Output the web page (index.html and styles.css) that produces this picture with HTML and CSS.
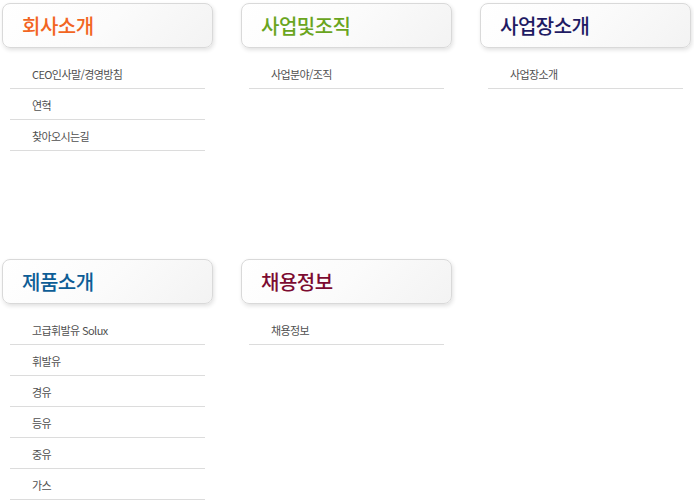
FILE: index.html
```html
<!DOCTYPE html>
<html lang="ko">
<head>
    <meta charset="UTF-8">
    <title>사이트맵</title>
    <link rel="stylesheet" href="styles.css">
</head>
<body>
    <div class="sitemap">
        <!-- 회사소개 -->
        <div class="group">
            <h2 class="group-title orange">회사소개</h2>
            <ul class="menu">
                <li>CEO인사말/경영방침</li>
                <li>연혁</li>
                <li>찾아오시는길</li>
            </ul>
        </div>

        <!-- 사업및조직 -->
        <div class="group">
            <h2 class="group-title green">사업및조직</h2>
            <ul class="menu">
                <li>사업분야/조직</li>
            </ul>
        </div>

        <!-- 사업장소개 -->
        <div class="group">
            <h2 class="group-title navy">사업장소개</h2>
            <ul class="menu">
                <li>사업장소개</li>
            </ul>
        </div>

        <!-- 제품소개 -->
        <div class="group">
            <h2 class="group-title blue">제품소개</h2>
            <ul class="menu">
                <li>고급휘발유 Solux</li>
                <li>휘발유</li>
                <li>경유</li>
                <li>등유</li>
                <li>중유</li>
                <li>가스</li>
            </ul>
        </div>

        <!-- 채용정보 -->
        <div class="group">
            <h2 class="group-title maroon">채용정보</h2>
            <ul class="menu">
                <li>채용정보</li>
            </ul>
        </div>
    </div>
</body>
</html>
```

FILE: styles.css
```css
body {
    margin: 0;
    background-color: #ffffff;
    font-family: "Noto Sans CJK KR", "Noto Sans", sans-serif;
}

.sitemap {
    display: grid;
    grid-template-columns: repeat(3, 211px);
    column-gap: 28px;
    row-gap: 108px;
    align-items: start;
    padding: 3px 2px 0;
}

.group-title {
    margin: 0;
    height: 43px;
    padding-left: 19px;
    border: 1px solid #d9d9d9;
    border-radius: 8px;
    background: linear-gradient(135deg, #ffffff 0%, #fbfbfb 50%, #f3f3f3 100%);
    box-shadow: 1px 2px 4px rgba(0, 0, 0, 0.12);
    font-size: 20px;
    font-weight: 500;
    line-height: 43px;
    letter-spacing: -0.5px;
}

.orange { color: #f26522; }
.green  { color: #6aa51e; }
.navy   { color: #1f1b63; }
.blue   { color: #0d5d96; }
.maroon { color: #7c0b31; }

.menu {
    list-style: none;
    margin: 10px 8px 0;
    padding: 0;
}

.menu li {
    height: 30px;
    padding-left: 22px;
    border-bottom: 1px solid #dcdcdc;
    color: #505050;
    font-size: 11px;
    line-height: 33px;
    letter-spacing: -0.6px;
}
```
